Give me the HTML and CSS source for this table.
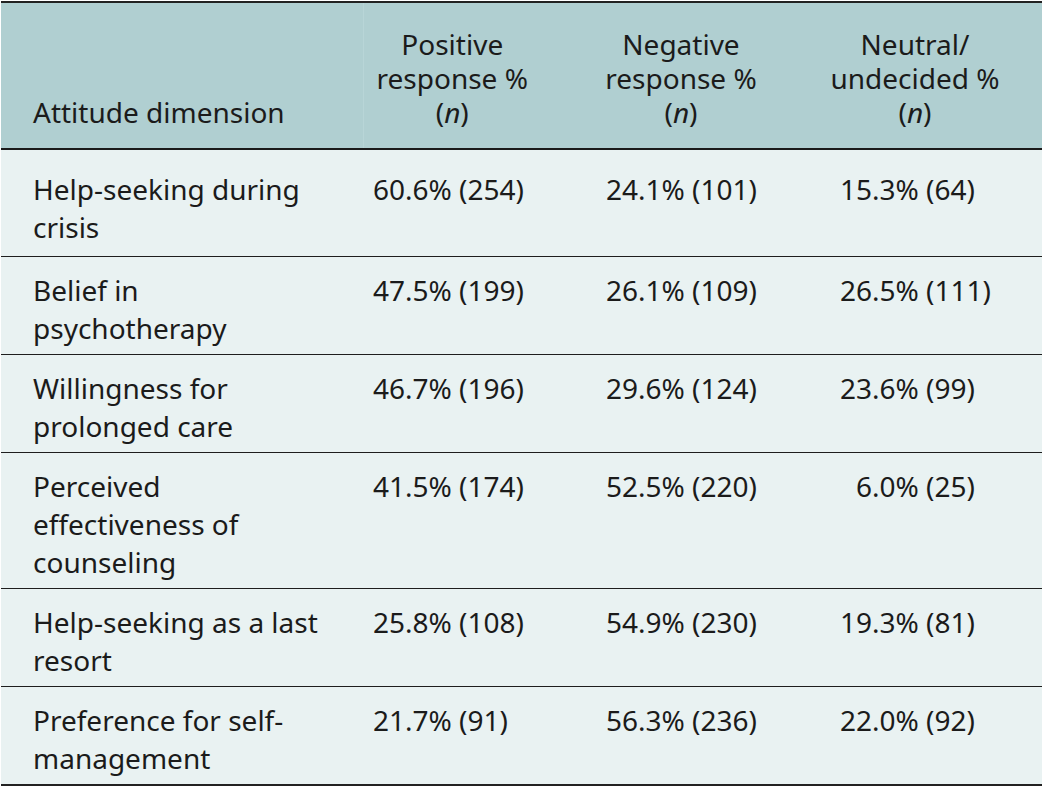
FILE: index.html
```html
<!DOCTYPE html>
<html lang="en">
<head>
<meta charset="utf-8">
<title>Attitude dimensions</title>
<link rel="stylesheet" href="styles.css">
</head>
<body>
<table class="data-table">
  <colgroup>
    <col class="c-dim">
    <col class="c-pos">
    <col class="c-neg">
    <col class="c-neu">
  </colgroup>
  <thead>
    <tr>
      <th class="h-dim">Attitude dimension</th>
      <th class="h-num h-pos">Positive<br>response %<br>(<i>n</i>)</th>
      <th class="h-num h-neg">Negative<br>response %<br>(<i>n</i>)</th>
      <th class="h-num h-neu">Neutral/<br>undecided %<br>(<i>n</i>)</th>
    </tr>
  </thead>
  <tbody>
    <tr class="first">
      <td class="dim">Help-seeking during crisis</td>
      <td class="pos">60.6% (254)</td>
      <td class="neg">24.1% (101)</td>
      <td class="neu">15.3% (64)</td>
    </tr>
    <tr>
      <td class="dim">Belief in psychotherapy</td>
      <td class="pos">47.5% (199)</td>
      <td class="neg">26.1% (109)</td>
      <td class="neu">26.5% (111)</td>
    </tr>
    <tr>
      <td class="dim">Willingness for prolonged care</td>
      <td class="pos">46.7% (196)</td>
      <td class="neg">29.6% (124)</td>
      <td class="neu">23.6% (99)</td>
    </tr>
    <tr>
      <td class="dim">Perceived effectiveness of counseling</td>
      <td class="pos">41.5% (174)</td>
      <td class="neg">52.5% (220)</td>
      <td class="neu">&#8199;6.0% (25)</td>
    </tr>
    <tr>
      <td class="dim">Help-seeking as a last resort</td>
      <td class="pos">25.8% (108)</td>
      <td class="neg">54.9% (230)</td>
      <td class="neu">19.3% (81)</td>
    </tr>
    <tr>
      <td class="dim">Preference for self-management</td>
      <td class="pos">21.7% (91)</td>
      <td class="neg">56.3% (236)</td>
      <td class="neu">22.0% (92)</td>
    </tr>
  </tbody>
</table>
</body>
</html>
```

FILE: styles.css
```css
html, body {
  margin: 0;
  padding: 0;
  background: #ffffff;
}

body {
  padding: 1px 0 0 1px;
  font-family: "Noto Sans", "Open Sans", "Liberation Sans", sans-serif;
  font-size: 28px;
  color: #1b1b1b;
}

.data-table {
  width: 1041px;
  border-collapse: collapse;
  table-layout: fixed;
  border-top: 2px solid #222222;
  border-bottom: 2px solid #222222;
}

.c-dim { width: 362px; }
.c-pos { width: 178px; }
.c-neg { width: 280px; }
.c-neu { width: 221px; }

thead th {
  background: #b0cfd1;
  font-weight: normal;
  line-height: 34px;
  vertical-align: bottom;
  padding: 24px 0 19px 0;
  border-bottom: 2px solid #1a1a1a;
}

.h-dim {
  text-align: left;
  padding-left: 32px;
  border-right: 1px solid #b8d5d7;
}

.h-num {
  text-align: center;
}

.h-neu {
  padding-right: 33px;
}

thead i {
  font-style: italic;
}

tbody td {
  background: #e9f2f2;
  line-height: 38px;
  vertical-align: top;
  padding: 14px 0 7px 0;
  border-bottom: 1px solid #1e1e1e;
}

tbody tr.first td {
  padding-top: 20px;
  padding-bottom: 10px;
}

tbody tr:last-child td {
  border-bottom: none;
}

.dim {
  padding-left: 32px;
  padding-right: 40px;
}

.pos {
  padding-left: 10px;
}

.neg {
  padding-left: 65px;
}

.neu {
  padding-left: 19px;
}
```
